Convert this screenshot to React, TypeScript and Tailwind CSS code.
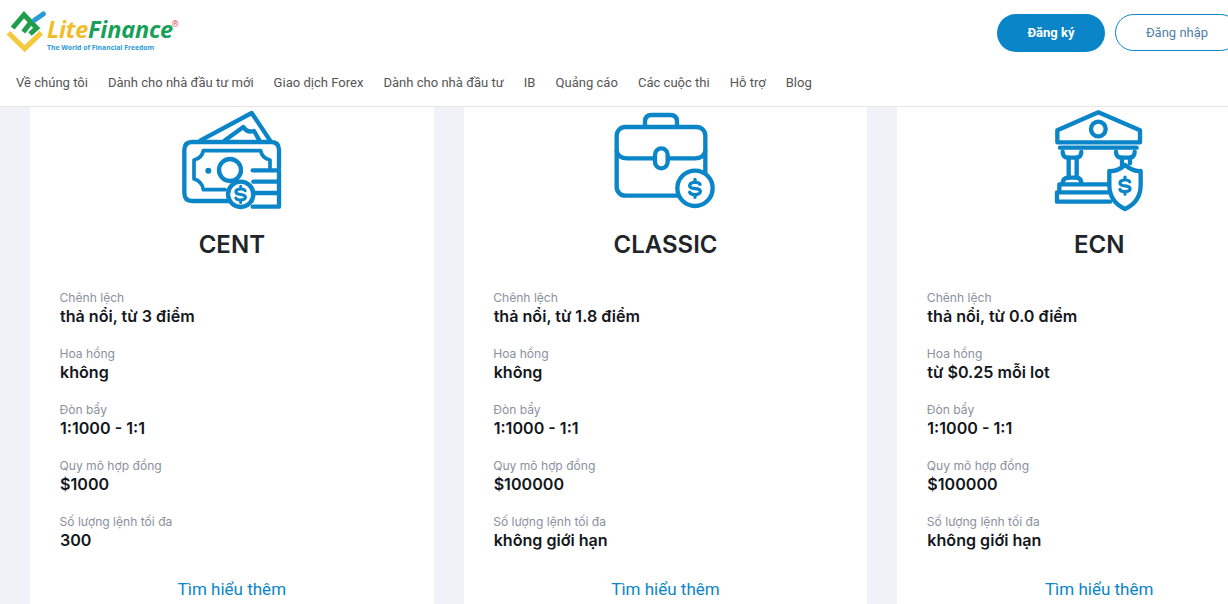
import React from 'react';

const navItems = [
  'Về chúng tôi',
  'Dành cho nhà đầu tư mới',
  'Giao dịch Forex',
  'Dành cho nhà đầu tư',
  'IB',
  'Quảng cáo',
  'Các cuộc thi',
  'Hỗ trợ',
  'Blog',
];

const BLUE = '#0a85c7';

// dollar sign drawn around a centre point, in the icon's own units
function Dollar({ x, y, scale = 1 }: { x: number; y: number; scale?: number }) {
  return (
    <g transform={`translate(${x} ${y}) scale(${scale})`} fill="none" stroke={BLUE} strokeWidth={10} strokeLinecap="round">
      <path d="M15,-12 C12,-20 -16,-21 -16,-8 C-16,5 16,-4 16,9 C16,22 -13,21 -16,12" />
      <path d="M0,-27 V-20 M0,20 V27" />
    </g>
  );
}

function MoneyIcon() {
  return (
    <svg viewBox="6 0 360 330" className="w-[120px] h-[110px]" fill="none" stroke={BLUE} strokeWidth={13} strokeLinejoin="round" strokeLinecap="round">
      <path d="M92,106 L245,24 L300,106" />
      <path d="M165,106 L220,66 C228,78 240,82 252,78 L268,106" />
      <path d="M245,288 H67 Q43,288 43,264 V135 Q43,111 67,111 H303 Q327,111 327,135 V190" />
      <path d="M100,137 H272 Q276,160 300,165 V190 M165,254 H100 Q96,228 72,222 V165 Q96,160 100,137" strokeWidth={11} />
      <circle cx="180" cy="195" r="33" />
      <circle cx="115" cy="197" r="9" fill={BLUE} stroke="none" />
      <path d="M248,196 H327 V305 H248 M250,230 H327 M252,264 H327" />
      <circle cx="212" cy="268" r="38" fill="#fff" />
      <Dollar x={212} y={268} scale={0.9} />
    </svg>
  );
}

function CaseIcon() {
  return (
    <svg viewBox="0 0 360 330" className="w-[120px] h-[110px]" fill="none" stroke={BLUE} strokeWidth={13} strokeLinejoin="round" strokeLinecap="round">
      <path d="M120,66 V50 Q120,30 140,30 H196 Q216,30 216,50 V66" />
      <rect x="35" y="66" width="266" height="206" rx="26" />
      <path d="M35,138 Q40,160 66,160 H150 M190,160 H270 Q296,160 301,138" />
      <rect x="150" y="130" width="38" height="60" rx="19" fill="#fff" />
      <circle cx="270" cy="250" r="53" fill="#fff" />
      <Dollar x={270} y={250} scale={1} />
    </svg>
  );
}

function BankIcon() {
  return (
    <svg viewBox="-3 0 360 330" className="w-[120px] h-[110px]" fill="none" stroke={BLUE} strokeWidth={13} strokeLinejoin="round" strokeLinecap="round">
      <path d="M52,76 L175,22 L300,76 V112 H52 Z" />
      <circle cx="175" cy="72" r="22" />
      <path d="M60,128 H290" />
      <path d="M68,140 Q68,158 86,158 H106 Q124,158 124,140" />
      <path d="M228,140 Q228,158 246,158 H266 Q284,158 284,140" />
      <path d="M86,158 V218 M110,158 V218 M246,158 V180 M270,158 V175" />
      <path d="M68,236 Q68,218 86,218 H108 Q124,218 124,236" />
      <path d="M58,238 H206 M58,238 V262 M51,262 H206 M51,262 V290 H210" />
      <path d="M255,180 Q280,200 302,198 V240 Q302,290 255,312 Q208,290 208,240 V198 Q232,200 255,180 Z" fill="#fff" />
      <Dollar x={255} y={242} scale={0.95} />
    </svg>
  );
}

const plans = [
  {
    name: 'CENT',
    icon: <MoneyIcon />,
    rows: [
      ['Chênh lệch', 'thả nổi, từ 3 điểm'],
      ['Hoa hồng', 'không'],
      ['Đòn bẩy', '1:1000 - 1:1'],
      ['Quy mô hợp đồng', '$1000'],
      ['Số lượng lệnh tối đa', '300'],
    ],
  },
  {
    name: 'CLASSIC',
    icon: <CaseIcon />,
    rows: [
      ['Chênh lệch', 'thả nổi, từ 1.8 điểm'],
      ['Hoa hồng', 'không'],
      ['Đòn bẩy', '1:1000 - 1:1'],
      ['Quy mô hợp đồng', '$100000'],
      ['Số lượng lệnh tối đa', 'không giới hạn'],
    ],
  },
  {
    name: 'ECN',
    icon: <BankIcon />,
    rows: [
      ['Chênh lệch', 'thả nổi, từ 0.0 điểm'],
      ['Hoa hồng', 'từ $0.25 mỗi lot'],
      ['Đòn bẩy', '1:1000 - 1:1'],
      ['Quy mô hợp đồng', '$100000'],
      ['Số lượng lệnh tối đa', 'không giới hạn'],
    ],
  },
];

function Logo() {
  return (
    <div className="flex items-start">
      <svg viewBox="0 0 150 180" className="w-[50px] h-[60px] shrink-0" fill="none" strokeLinejoin="miter">
        <path d="M25,98 L74,146 L124,98" stroke="#f5c93b" strokeWidth={15} />
        <path d="M38,84 L72,44 L110,84 L90,102" stroke="#1e9e4a" strokeWidth={15} />
        <path d="M70,96 L90,70" stroke="#1e9e4a" strokeWidth={15} />
        <path d="M104,60 L130,42" stroke="#2a9bd8" strokeWidth={15} strokeLinecap="round" />
      </svg>
      <div className="-ml-[3px] pt-[17px] relative">
        <div className="text-[23.5px] leading-[25px] font-bold italic tracking-[-0.2px] font-['Open_Sans',sans-serif]">
          <span className="text-[#f2bd2c]">Lite</span>
          <span className="text-[#18a05a]">Finance</span>
        </div>
        <div className="text-[6.8px] leading-[9px] font-bold text-[#2a9bd8] font-['Open_Sans',sans-serif] mt-[1px]">
          The World of Financial Freedom
        </div>
        <span className="absolute -right-[6px] top-[20px] text-[9px] leading-none text-[#d9534f]">®</span>
      </div>
    </div>
  );
}

export default function App() {
  return (
    <div className="w-[1228px] h-[604px] overflow-hidden bg-[#f0f2f8] font-['Inter',sans-serif]">
      {/* Header */}
      <header className="h-[107px] bg-white border-b border-[#e6e6e6] font-['Roboto',sans-serif]">
        <div className="flex h-[68px] items-start">
          <Logo />
          <div className="ml-auto flex gap-[10px] pt-[14px] -mr-[11px]">
            <button className="w-[108px] h-[38px] rounded-full bg-[#0a85c7] text-white text-[13px] font-bold">
              Đăng ký
            </button>
            <button className="w-[124px] h-[37px] rounded-full border border-[#0a85c7] bg-white text-[#4f7fa8] text-[13px]">
              Đăng nhập
            </button>
          </div>
        </div>
        <nav className="flex gap-[20px] pl-[16px] text-[13.05px] leading-[30px] text-[#555555]">
          {navItems.map((item) => (
            <a key={item} href="#">
              {item}
            </a>
          ))}
        </nav>
      </header>

      {/* Account cards */}
      <div className="flex gap-[30px] pl-[30px]">
        {plans.map((plan) => (
          <div key={plan.name} className="w-[403.67px] shrink-0 h-[520px] bg-white px-[30px]">
            <div className="flex justify-center -mt-[2px]">{plan.icon}</div>
            <h3 className="text-center text-[24px] leading-[30px] font-semibold text-[#212529] mt-[15px]">
              {plan.name}
            </h3>
            <div className="mt-[29px]">
              {plan.rows.map(([label, value]) => (
                <div key={label} className="h-[56px]">
                  <div className="text-[12.1px] leading-[18px] text-[#8a919e] -ml-[0.5px]">{label}</div>
                  <div className="text-[16.1px] leading-[18px] font-semibold text-[#14171c]">{value}</div>
                </div>
              ))}
            </div>
            <div className="text-center mt-[8px]">
              <a href="#" className="text-[17px] leading-[24px] text-[#0a85c7] font-['Roboto',sans-serif]">
                Tìm hiểu thêm
              </a>
            </div>
          </div>
        ))}
      </div>
    </div>
  );
}
